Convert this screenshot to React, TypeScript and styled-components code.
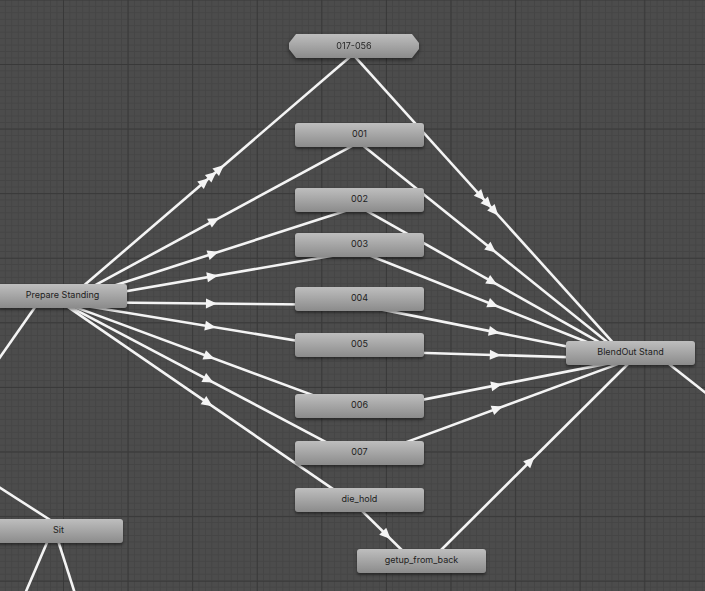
import React from 'react'
import styled, { createGlobalStyle } from 'styled-components'

const GlobalStyle = createGlobalStyle`
    html, body {
        margin: 0;
        padding: 0;
        background: #4c4c4c;
        overflow: hidden;
    }
`;

// grid spacing of the graph view at the current zoom
const MAJOR = 64.6
const MINOR = MAJOR / 10

const Canvas = styled.div`
    position: relative;
    width: 705px;
    height: 591px;
    overflow: hidden;
    background-color: #4c4c4c;
    background-image:
        linear-gradient(#393939 1px, transparent 1px),
        linear-gradient(90deg, #393939 1px, transparent 1px),
        linear-gradient(#454545 1px, transparent 1px),
        linear-gradient(90deg, #454545 1px, transparent 1px);
    background-size:
        ${MAJOR}px ${MAJOR}px,
        ${MAJOR}px ${MAJOR}px,
        ${MINOR}px ${MINOR}px,
        ${MINOR}px ${MINOR}px;
    background-position:
        0 -0.6px,
        63px 0,
        4.86px 5.86px,
        4.86px 5.86px;
`;

const Wires = styled.svg`
    position: absolute;
    inset: 0;
    width: 705px;
    height: 591px;
`;

const StateNode = styled.div<{ $x: number; $y: number }>`
    position: absolute;
    left: ${p => p.$x}px;
    top: ${p => p.$y}px;
    box-sizing: border-box;
    width: 129px;
    height: 24px;
    padding-bottom: 3px;
    border-radius: 3px;
    background: linear-gradient(#bebebe, #8b8b8b);
    box-shadow: 0 2px 3px rgba(0, 0, 0, 0.45);
    display: flex;
    align-items: center;
    justify-content: center;
    font-family: Inter, "Noto Sans", sans-serif;
    font-size: 9px;
    color: #1d1d1d;
    white-space: nowrap;
`;

const MachineShadow = styled.div<{ $x: number; $y: number }>`
    position: absolute;
    left: ${p => p.$x}px;
    top: ${p => p.$y}px;
    filter: drop-shadow(0 2px 2px rgba(0, 0, 0, 0.5));
`;

const MachineNode = styled.div`
    box-sizing: border-box;
    width: 130px;
    height: 24px;
    padding-bottom: 2px;
    clip-path: polygon(7px 0, calc(100% - 7px) 0, 100% 9px, 100% 15px, calc(100% - 7px) 100%, 7px 100%, 0 15px, 0 9px);
    background: linear-gradient(#bebebe, #8b8b8b);
    display: flex;
    align-items: center;
    justify-content: center;
    font-family: Inter, "Noto Sans", sans-serif;
    font-size: 9px;
    color: #262626;
`;

type Node = { x: number; y: number; label: string; machine?: boolean }

const nodes: Record<string, Node> = {
    sub: { x: 289, y: 34, label: '017-056', machine: true },
    s001: { x: 295, y: 123, label: '001' },
    s002: { x: 295, y: 188, label: '002' },
    s003: { x: 295, y: 233, label: '003' },
    s004: { x: 295, y: 287, label: '004' },
    s005: { x: 295, y: 333, label: '005' },
    s006: { x: 295, y: 394, label: '006' },
    s007: { x: 295, y: 441, label: '007' },
    dieHold: { x: 295, y: 488, label: 'die_hold' },
    getup: { x: 357, y: 549, label: 'getup_from_back' },
    prepare: { x: -2, y: 284, label: 'Prepare Standing' },
    blendOut: { x: 566, y: 341, label: 'BlendOut Stand' },
    sit: { x: -6, y: 519, label: 'Sit' },
}

const center = (n: Node) => ({ x: n.x + 64.5, y: n.y + 12 })

// [from, to, arrow count]
const transitions: [string, string, number][] = [
    ['prepare', 'sub', 3],
    ['sub', 'blendOut', 3],
    ['prepare', 's001', 1],
    ['prepare', 's002', 1],
    ['prepare', 's003', 1],
    ['prepare', 's004', 1],
    ['prepare', 's005', 1],
    ['prepare', 's006', 1],
    ['prepare', 's007', 1],
    ['prepare', 'dieHold', 1],
    ['s001', 'blendOut', 1],
    ['s002', 'blendOut', 1],
    ['s003', 'blendOut', 1],
    ['s004', 'blendOut', 1],
    ['s005', 'blendOut', 1],
    ['s006', 'blendOut', 1],
    ['s007', 'blendOut', 1],
    ['dieHold', 'getup', 1],
    ['getup', 'blendOut', 1],
]

// transitions to states outside the view
const strays: [number, number, number, number][] = [
    [40, 300, -20, 386],
    [655, 353, 740, 420],
    [-40, 462, 58, 525],
    [-40, 522, 58, 533],
    [52, 531, 21, 603],
    [55, 531, 78, 603],
]

const OFFSET = 6
const WIRE = '#f4f4f4'

function Transition({ from, to, count }: { from: Node; to: Node; count: number }) {
    const a = center(from)
    const b = center(to)
    const len = Math.hypot(b.x - a.x, b.y - a.y)
    const dx = (b.x - a.x) / len
    const dy = (b.y - a.y) / len
    const px = -dy * OFFSET
    const py = dx * OFFSET
    const x1 = a.x + px, y1 = a.y + py
    const x2 = b.x + px, y2 = b.y + py
    const mx = (x1 + x2) / 2
    const my = (y1 + y2) / 2

    const heads = []
    for (let i = 0; i < count; i++) {
        const k = (i - (count - 1) / 2) * 10
        const cx = mx + dx * k
        const cy = my + dy * k
        const tip = `${cx + dx * 6},${cy + dy * 6}`
        const left = `${cx - dx * 5 - dy * 5},${cy - dy * 5 + dx * 5}`
        const right = `${cx - dx * 5 + dy * 5},${cy - dy * 5 - dx * 5}`
        heads.push(<polygon key={i} points={`${tip} ${left} ${right}`} fill={WIRE} />)
    }

    return (
        <g>
            <line x1={x1} y1={y1} x2={x2} y2={y2} stroke={WIRE} strokeWidth={2.6} />
            {heads}
        </g>
    )
}

export default function App() {
    return (
        <>
            <GlobalStyle />
            <Canvas>
                <Wires viewBox="0 0 705 591">
                    {strays.map(([x1, y1, x2, y2], i) => (
                        <line key={i} x1={x1} y1={y1} x2={x2} y2={y2} stroke={WIRE} strokeWidth={2.6} />
                    ))}
                    {transitions.map(([f, t, n]) => (
                        <Transition key={f + t} from={nodes[f]} to={nodes[t]} count={n} />
                    ))}
                </Wires>
                {Object.entries(nodes).map(([key, n]) =>
                    n.machine ? (
                        <MachineShadow key={key} $x={n.x} $y={n.y}>
                            <MachineNode>{n.label}</MachineNode>
                        </MachineShadow>
                    ) : (
                        <StateNode key={key} $x={n.x} $y={n.y}>
                            {n.label}
                        </StateNode>
                    )
                )}
            </Canvas>
        </>
    )
}
